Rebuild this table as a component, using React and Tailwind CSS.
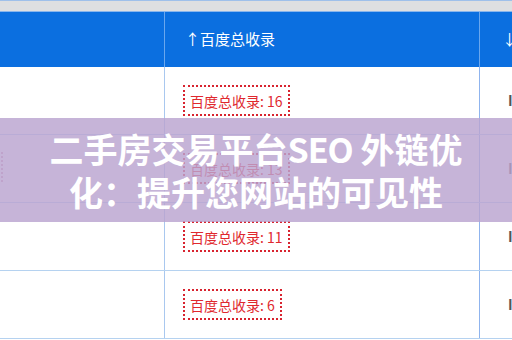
const rows = [16, 13, 11, 6];

function CountBox({ n }) {
  return (
    <span className="inline-flex items-center h-[31px] px-[5px] border-2 border-dotted border-[#d8232f] text-[#e0282e] text-[14px] leading-none">
      百度总收录: {n}
    </span>
  );
}

export default function App() {
  return (
    <div
      className="relative w-[512px] h-[340px] overflow-hidden bg-white"
      style={{ fontFamily: '"Microsoft YaHei", "Noto Sans CJK SC", "Noto Sans", sans-serif' }}
    >
      {/* top strip */}
      <div className="h-[12px] bg-[#dedfe1] border-t border-[#9fc0ea] border-b border-b-[#8ab6ec]"></div>

      {/* header */}
      <div className="grid grid-cols-[165px_315px_1fr] h-[55px] bg-[#0b6fe0] text-white text-[15px]">
        <div className="border-r border-[#6aa7ee]"></div>
        <div className="flex items-center pl-[20px] border-r border-[#6aa7ee] whitespace-nowrap">↑百度总收录</div>
        <div className="flex items-center pl-[22px] whitespace-nowrap">↓相关</div>
      </div>

      {/* rows */}
      {rows.map((n, i) => (
        <div key={i} className="grid grid-cols-[165px_315px_1fr] h-[68px] border-b border-[#b5d2f0]">
          <div className="relative border-r border-[#a9c8ef]">
            {i === 1 && (
              <span className="absolute left-0 top-[17px] h-[30px] w-[3px] border-r-2 border-dotted border-[#d8a0b4]"></span>
            )}
          </div>
          <div className="flex items-center pl-[18px] border-r border-[#8fb4ee]">
            <CountBox n={n} />
          </div>
          <div className="flex items-center pl-[28px] text-[#555] font-bold text-[14px] whitespace-nowrap">I</div>
        </div>
      ))}

      {/* title overlay */}
      <div className="absolute left-0 right-0 top-[118px] h-[104px] bg-[rgba(185,163,207,0.82)] flex flex-col items-center justify-center">
        <div
          className="text-white font-bold text-[34px] leading-[43px] text-center whitespace-nowrap"
          style={{ fontFamily: '"Noto Sans CJK SC", sans-serif' }}
        >
          <div>
            二手房交易平台<span className="tracking-[-1px]">SEO</span> 外链优
          </div>
          <div>化：提升您网站的可见性</div>
        </div>
      </div>
    </div>
  );
}
